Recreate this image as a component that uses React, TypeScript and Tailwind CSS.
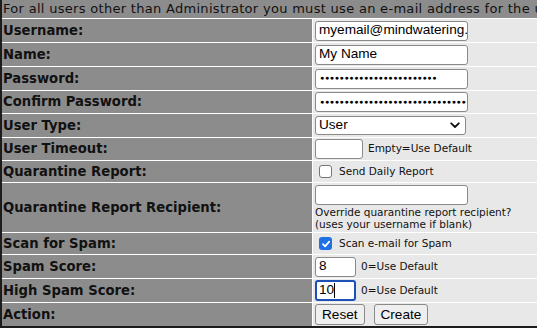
import React from "react";

const LBL =
  "bg-[#8c8c8c] text-[#111] font-bold text-[13.2px] leading-none flex items-center pl-[1px] whitespace-nowrap";
const VAL = "bg-[#e8e8e8] flex items-center pl-[2px] whitespace-nowrap";
const SMALL = "text-[10.5px] text-[#111]";
const INPUT =
  "h-[20px] bg-white border border-[#8a8a8a] rounded-[3px] px-[2px] text-[13.6px] text-black outline-none";

function Check({ checked }: { checked?: boolean }) {
  return checked ? (
    <span className="inline-flex w-[13px] h-[13px] rounded-[3px] bg-[#1f6fe5] items-center justify-center">
      <svg width="10" height="10" viewBox="0 0 10 10">
        <path d="M2 5.2 L4.1 7.3 L8.2 2.6" stroke="white" strokeWidth="1.8" fill="none" strokeLinecap="round" strokeLinejoin="round" />
      </svg>
    </span>
  ) : (
    <span className="inline-block w-[13px] h-[13px] rounded-[3px] bg-white border border-[#767676]" />
  );
}

export default function App() {
  const font = { fontFamily: '"DejaVu Sans", Verdana, sans-serif' };
  const arial = { fontFamily: '"Liberation Sans", Arial, sans-serif' };
  return (
    <div className="w-[537px] h-[334px] overflow-hidden bg-white" style={font}>
      <div className="w-[640px] border-l-2 border-b-2 border-[#1c1c1c] bg-white grid grid-cols-[310px_1fr] gap-px grid-rows-[18px_23px_23px_23px_22px_23px_22px_21px_49px_21px_23px_23px_23px]">
        <div className="col-span-2 bg-[#8c8c8c] text-[13px] tracking-[0.3px] text-[#111] flex items-center pl-[1px] whitespace-nowrap">
          For all users other than Administrator you must use an e-mail address for the username
        </div>

        <div className={LBL}>Username:</div>
        <div className={VAL}>
          <div className={INPUT + " w-[153px] overflow-hidden flex items-center"} style={arial}>
            <span className="pl-[1px]">myemail@mindwatering.com</span>
          </div>
        </div>

        <div className={LBL}>Name:</div>
        <div className={VAL}>
          <div className={INPUT + " w-[153px] flex items-center"} style={arial}>
            <span className="pl-[1px]">My Name</span>
          </div>
        </div>

        <div className={LBL}>Password:</div>
        <div className={VAL}>
          <div className={INPUT + " w-[153px] overflow-hidden flex items-center"}>
            <span className="pl-[2px] text-[7px] tracking-[0.65px]" style={arial}>
              ●●●●●●●●●●●●●●●●●●●●●●●●
            </span>
          </div>
        </div>

        <div className={LBL}>Confirm Password:</div>
        <div className={VAL}>
          <div className={INPUT + " w-[153px] overflow-hidden flex items-center"}>
            <span className="pl-[2px] text-[7px] tracking-[0.65px]" style={arial}>
              ●●●●●●●●●●●●●●●●●●●●●●●●●●●●●●●●●●
            </span>
          </div>
        </div>

        <div className={LBL}>User Type:</div>
        <div className={VAL}>
          <div
            className="h-[19px] w-[151px] bg-white border border-[#8a8a8a] rounded-[3px] flex items-center justify-between pl-[3px] pr-[5px] text-[13.6px] text-black"
            style={arial}
          >
            <span>User</span>
            <svg width="10" height="7" viewBox="0 0 10 7">
              <path d="M1.2 1.3 L5 5 L8.8 1.3" stroke="#111" strokeWidth="1.8" fill="none" strokeLinecap="round" strokeLinejoin="round" />
            </svg>
          </div>
        </div>

        <div className={LBL}>User Timeout:</div>
        <div className={VAL + " gap-[5px]"}>
          <div className={INPUT + " w-[48px]"} />
          <span className={SMALL}>Empty=Use Default</span>
        </div>

        <div className={LBL}>Quarantine Report:</div>
        <div className={VAL + " gap-[7px] pl-[6px]"}>
          <Check />
          <span className={SMALL}>Send Daily Report</span>
        </div>

        <div className={LBL}>Quarantine Report Recipient:</div>
        <div className="bg-[#e8e8e8] flex flex-col pl-[2px] pt-[2px] whitespace-nowrap">
          <div className={INPUT + " w-[153px] shrink-0"} />
          <div className={SMALL + " leading-[12px] mt-[1px]"}>
            Override quarantine report recipient?
            <br />
            (uses your username if blank)
          </div>
        </div>

        <div className={LBL}>Scan for Spam:</div>
        <div className={VAL + " gap-[7px] pl-[6px]"}>
          <Check checked />
          <span className={SMALL}>Scan e-mail for Spam</span>
        </div>

        <div className={LBL}>Spam Score:</div>
        <div className={VAL + " gap-[5px]"}>
          <div className={INPUT + " w-[41px] flex items-center"} style={arial}>
            <span className="pl-[1px]">8</span>
          </div>
          <span className={SMALL}>0=Use Default</span>
        </div>

        <div className={LBL}>High Spam Score:</div>
        <div className={VAL + " gap-[5px]"}>
          <div
            className="h-[21px] w-[41px] bg-white border-2 border-[#1d4fb8] rounded-[3px] px-[1px] text-[13.6px] text-black flex items-center"
            style={arial}
          >
            <span className="pl-[1px]">10</span>
            <span className="inline-block w-px h-[15px] bg-black" />
          </div>
          <span className={SMALL}>0=Use Default</span>
        </div>

        <div className={LBL}>Action:</div>
        <div className={VAL + " gap-[9px]"} style={arial}>
          <button className="h-[21px] px-[6px] bg-[#efefef] border border-[#8a8a8a] rounded-[3px] text-[13.6px] text-black leading-none">
            Reset
          </button>
          <button className="h-[21px] px-[6px] bg-[#efefef] border border-[#8a8a8a] rounded-[3px] text-[13.6px] text-black leading-none">
            Create
          </button>
        </div>
      </div>
    </div>
  );
}
